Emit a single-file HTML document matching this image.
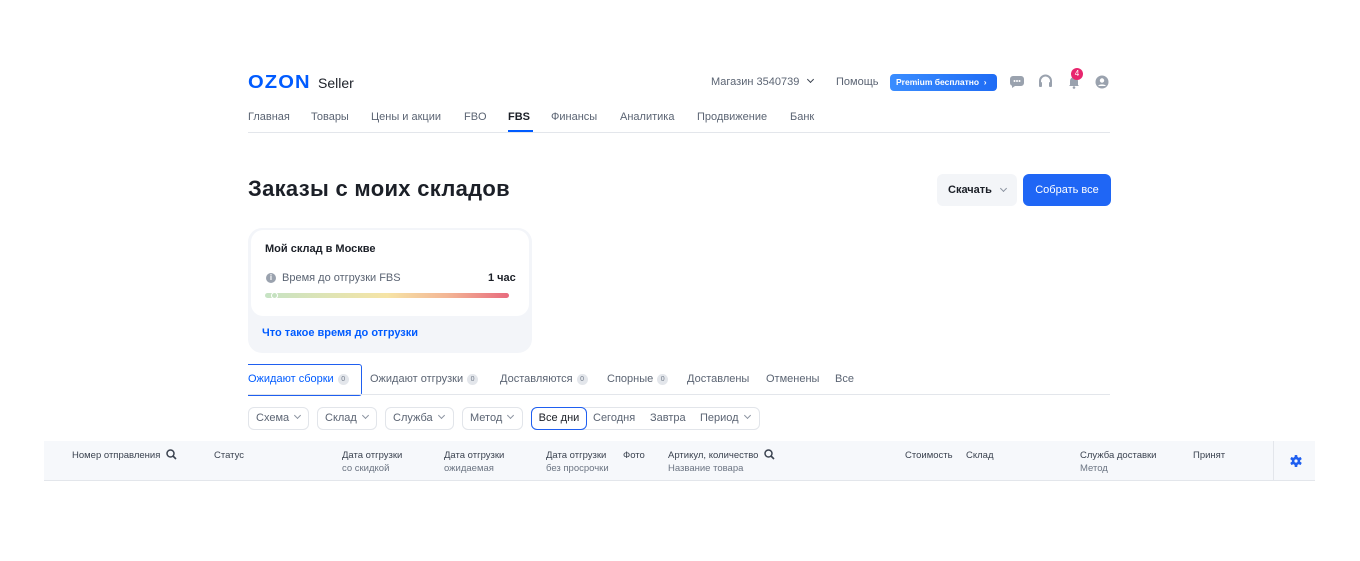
<!DOCTYPE html>
<html><head><meta charset="utf-8"><style>
*{margin:0;padding:0;box-sizing:border-box}
body{width:1360px;height:561px;background:#fff;font-family:"Liberation Sans",sans-serif;position:relative;overflow:hidden;color:#1b1f27}
.a{position:absolute;white-space:nowrap}
.nav{font-size:11px;color:#5b6473;top:111px}
.g{color:#5b6473}
.tab{font-size:11px;color:#5b6473;top:373px}
.bd{display:inline-block;width:11px;height:11px;border-radius:50%;background:#e3e6eb;font-size:7px;color:#707a88;text-align:center;line-height:11px;vertical-align:1px;margin-left:4px}
.f{top:407px;height:23px;border:1px solid #e2e5ea;border-radius:6px;font-size:11px;color:#5b6473;padding:0 7px;line-height:21px}
.ch{display:inline-block;width:5px;height:5px;border-right:1.3px solid #8b93a0;border-bottom:1.3px solid #8b93a0;transform:rotate(45deg);margin-left:6px;vertical-align:3px}
.th{font-size:9.5px;color:#3b4350;top:449px;line-height:13px}
.th span{color:#6c7583}
.sr{display:inline-block;vertical-align:-2px;margin-left:6px}
</style></head><body>
<div class="a" style="left:248px;top:72px;font-size:18px;font-weight:900;color:#005bff;letter-spacing:1px;transform:scaleX(1.12);transform-origin:left">OZON</div>
<div class="a" style="left:318px;top:75px;font-size:14px;color:#1b1f27">Seller</div>
<div class="a g" style="left:711px;top:76px;font-size:11px">Магазин 3540739 <span class="ch" style="border-color:#3b4350"></span></div>
<div class="a g" style="left:836px;top:76px;font-size:11px">Помощь</div>
<div class="a" style="left:890px;top:74px;width:107px;height:17px;border-radius:4px;background:linear-gradient(90deg,#3a8dff,#1f6cf5);color:#fff;font-size:8.5px;font-weight:bold;line-height:17px;padding-left:6px">Premium бесплатно &nbsp;›</div>
<svg class="a" style="left:1010px;top:76px" width="14" height="12" viewBox="0 0 14 12"><path d="M3 0h8a3 3 0 0 1 3 3v4a3 3 0 0 1-3 3H5l-3 2v-2.3A3 3 0 0 1 0 7V3a3 3 0 0 1 3-3z" fill="#9aa2ae"/><circle cx="4.5" cy="5" r="1" fill="#fff"/><circle cx="7" cy="5" r="1" fill="#fff"/><circle cx="9.5" cy="5" r="1" fill="#fff"/></svg>
<svg class="a" style="left:1038px;top:74px" width="15" height="15" viewBox="0 0 15 15"><path d="M2 9V7a5.5 5.5 0 0 1 11 0v2" fill="none" stroke="#9aa2ae" stroke-width="2"/><rect x="1" y="8" width="3" height="5" rx="1" fill="#9aa2ae"/><rect x="11" y="8" width="3" height="5" rx="1" fill="#9aa2ae"/></svg>
<svg class="a" style="left:1067px;top:75px" width="14" height="14" viewBox="0 0 14 14"><path d="M3 10V6a4 4 0 0 1 8 0v4l1 1H2z" fill="#9aa2ae"/><circle cx="7" cy="12.5" r="1.3" fill="#9aa2ae"/></svg>
<div class="a" style="left:1071px;top:68px;width:12px;height:12px;border-radius:50%;background:#e8266e;color:#fff;font-size:8px;text-align:center;line-height:12px">4</div>
<svg class="a" style="left:1095px;top:75px" width="14" height="14" viewBox="0 0 14 14"><circle cx="7" cy="7" r="6.5" fill="#9aa2ae"/><circle cx="7" cy="5.5" r="2.2" fill="#fff"/><path d="M3 11a4.5 3 0 0 1 8 0" fill="#fff"/></svg>

<div class="a nav" style="left:248px">Главная</div>
<div class="a nav" style="left:311px">Товары</div>
<div class="a nav" style="left:371px">Цены и акции</div>
<div class="a nav" style="left:464px">FBO</div>
<div class="a nav" style="left:508px;color:#1b1f27;font-weight:bold">FBS</div>
<div class="a" style="left:508px;top:130px;width:25px;height:2px;background:#005bff"></div>
<div class="a nav" style="left:551px">Финансы</div>
<div class="a nav" style="left:620px">Аналитика</div>
<div class="a nav" style="left:697px">Продвижение</div>
<div class="a nav" style="left:790px">Банк</div>
<div class="a" style="left:248px;top:132px;width:862px;height:1px;background:#e3e6eb"></div>

<div class="a" style="left:248px;top:176px;font-size:22px;font-weight:bold;letter-spacing:0.3px">Заказы с моих складов</div>
<div class="a" style="left:937px;top:174px;width:80px;height:32px;background:#f3f5f8;border-radius:6px;font-size:11px;font-weight:bold;line-height:32px;padding-left:11px">Скачать <span class="ch" style="vertical-align:2px"></span></div>
<div class="a" style="left:1023px;top:174px;width:88px;height:32px;background:#1f66f5;border-radius:6px;font-size:11px;color:#fff;line-height:32px;text-align:center">Собрать все</div>

<div class="a" style="left:248px;top:228px;width:284px;height:125px;background:#f3f5f9;border-radius:14px"></div>
<div class="a" style="left:251px;top:230px;width:278px;height:86px;background:#fff;border-radius:12px"></div>
<div class="a" style="left:265px;top:243px;font-size:11px;font-weight:bold">Мой склад в Москве</div>
<div class="a" style="left:266px;top:273px;width:10px;height:10px;border-radius:50%;background:#9aa2ae;color:#fff;font-size:8px;font-weight:bold;text-align:center;line-height:10px">i</div>
<div class="a g" style="left:282px;top:272px;font-size:11px">Время до отгрузки FBS</div>
<div class="a" style="left:488px;top:272px;font-size:11px;font-weight:bold">1 час</div>
<div class="a" style="left:265px;top:293px;width:244px;height:5px;border-radius:3px;background:linear-gradient(90deg,#c6e3c4,#f6e4a6 50%,#f3b595 75%,#e86b7e)"></div>
<div class="a" style="left:271px;top:292px;width:7px;height:7px;border-radius:50%;background:#c5e1c0;border:1px solid #fff"></div>
<div class="a" style="left:262px;top:327px;font-size:11px;color:#005bff;font-weight:bold">Что такое время до отгрузки</div>

<div class="a" style="left:248px;top:364px;width:114px;height:32px;border:1.5px solid #1f5ff0;border-left:none;border-radius:0 3px 3px 0"></div>
<div class="a tab" style="left:248px;color:#005bff">Ожидают сборки<span class="bd">0</span></div>
<div class="a tab" style="left:370px">Ожидают отгрузки<span class="bd">0</span></div>
<div class="a tab" style="left:500px">Доставляются<span class="bd">0</span></div>
<div class="a tab" style="left:607px">Спорные<span class="bd">0</span></div>
<div class="a tab" style="left:687px">Доставлены</div>
<div class="a tab" style="left:766px">Отменены</div>
<div class="a tab" style="left:835px">Все</div>
<div class="a" style="left:248px;top:394px;width:862px;height:1px;background:#e3e6eb"></div>

<div class="a f" style="left:248px;width:61px">Схема<span class="ch"></span></div>
<div class="a f" style="left:317px;width:60px">Склад<span class="ch"></span></div>
<div class="a f" style="left:385px;width:69px">Служба<span class="ch"></span></div>
<div class="a f" style="left:462px;width:61px">Метод<span class="ch"></span></div>
<div class="a f" style="left:531px;width:229px"></div>
<div class="a" style="left:531px;top:407px;width:56px;height:23px;border:1.5px solid #1f5ff0;border-radius:6px;font-size:11px;color:#1b1f27;line-height:20px;text-align:center">Все дни</div>
<div class="a g" style="left:593px;top:412px;font-size:11px">Сегодня</div>
<div class="a g" style="left:650px;top:412px;font-size:11px">Завтра</div>
<div class="a g" style="left:700px;top:412px;font-size:11px">Период<span class="ch"></span></div>

<div class="a" style="left:44px;top:441px;width:1271px;height:40px;background:#f6f8fb;border-bottom:1px solid #e3e6eb"></div>
<div class="a" style="left:1273px;top:441px;width:1px;height:40px;background:#e3e6eb"></div>
<div class="a th" style="left:72px">Номер отправления<svg class="sr" width="11" height="11" viewBox="0 0 11 11"><circle cx="4.5" cy="4.5" r="3.5" fill="none" stroke="#3b4350" stroke-width="1.5"/><path d="M7 7l3 3" stroke="#3b4350" stroke-width="1.6"/></svg></div>
<div class="a th" style="left:214px">Статус</div>
<div class="a th" style="left:342px">Дата отгрузки<br><span>со скидкой</span></div>
<div class="a th" style="left:444px">Дата отгрузки<br><span>ожидаемая</span></div>
<div class="a th" style="left:546px">Дата отгрузки<br><span>без просрочки</span></div>
<div class="a th" style="left:623px">Фото</div>
<div class="a th" style="left:668px">Артикул, количество<svg class="sr" width="11" height="11" viewBox="0 0 11 11"><circle cx="4.5" cy="4.5" r="3.5" fill="none" stroke="#3b4350" stroke-width="1.5"/><path d="M7 7l3 3" stroke="#3b4350" stroke-width="1.6"/></svg><br><span>Название товара</span></div>
<div class="a th" style="left:905px">Стоимость</div>
<div class="a th" style="left:966px">Склад</div>
<div class="a th" style="left:1080px">Служба доставки<br><span>Метод</span></div>
<div class="a th" style="left:1193px">Принят</div>
<svg class="a" style="left:1290px;top:455px" width="12" height="12" viewBox="0 0 12 12"><g fill="#1f5ff0"><circle cx="6" cy="6" r="4.2"/><rect x="4.6" y="0" width="2.8" height="12" rx="0.8"/><rect x="4.6" y="0" width="2.8" height="12" rx="0.8" transform="rotate(60 6 6)"/><rect x="4.6" y="0" width="2.8" height="12" rx="0.8" transform="rotate(120 6 6)"/></g><circle cx="6" cy="6" r="1.6" fill="#f6f8fb"/></svg>
</body></html>
